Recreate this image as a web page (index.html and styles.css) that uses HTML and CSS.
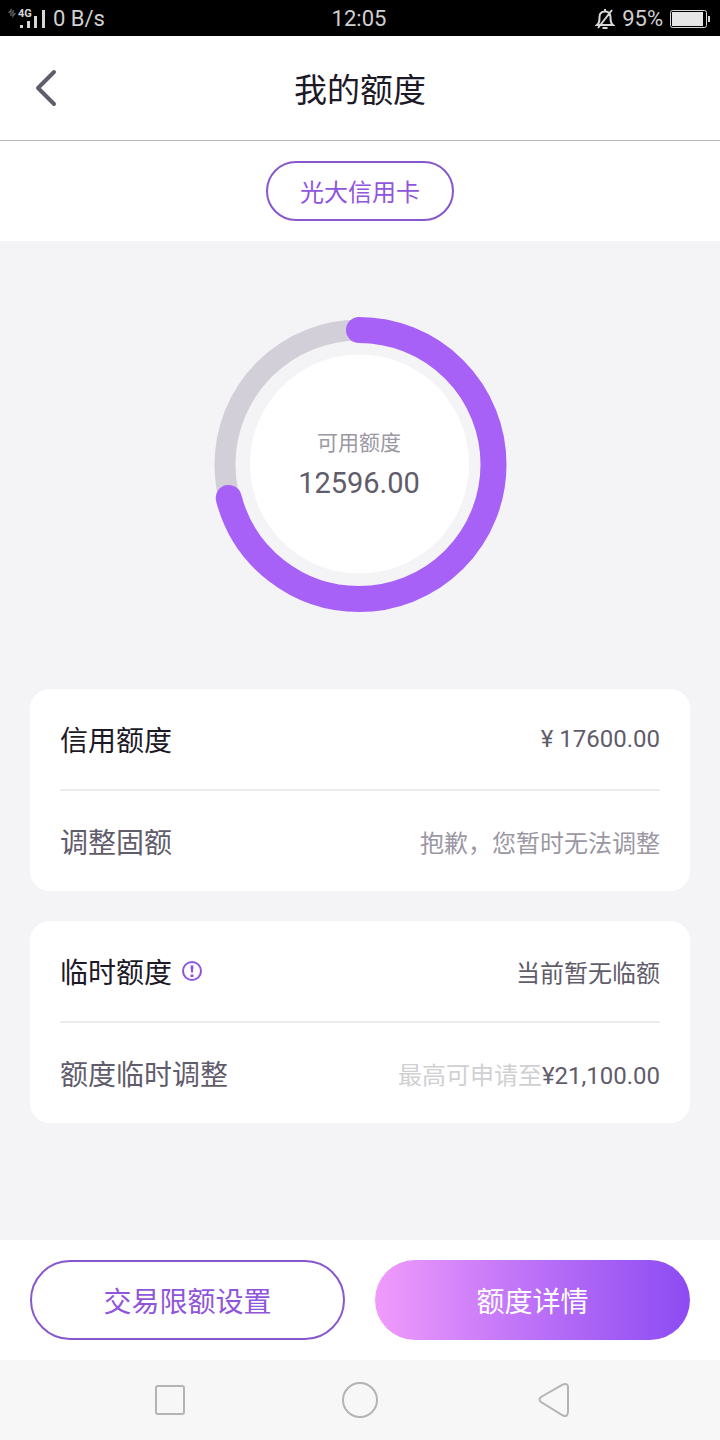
FILE: index.html
```
<!DOCTYPE html>
<html lang="zh-CN">
<head>
    <meta charset="UTF-8">
    <meta name="viewport" content="width=device-width, initial-scale=1.0">
    <title>我的额度</title>
    <link rel="stylesheet" href="styles.css">
</head>
<body>
    <div class="status-bar">
        <div class="status-left">
            <svg width="38" height="24" viewBox="0 0 38 24">
                <path d="M0.500 6L3 3V9M5 3V9L7.500 6" fill="none" stroke="#555" stroke-width="1.500"/>
                <text class="network" x="10" y="10">4G</text>
                <path d="M12 18h3v3h-3zM19 14h3v7h-3zM26 9h3v12h-3zM34 3h3v18h-3z" fill="#d8d8d8"/>
            </svg>
            <span>0 B/s</span>
        </div>
        <span>12:05</span>
        <div class="status-right">
            <svg width="20" height="22" viewBox="0 0 20 22" fill="none" stroke="#d8d8d8" stroke-width="2">
                <path d="M2 17H18C15.500 15 15.500 13 15.500 9C15.500 5 13 3.500 10 3.500S4.500 5 4.500 9C4.500 13 4.500 15 2 17ZM10 1V4M7.500 20H12.500M17 2L3 20"/>
            </svg>
            <span>95%</span>
            <svg width="40" height="20" viewBox="0 0 40 20">
                <rect x="0.500" y="1.500" width="36" height="17" rx="2" fill="none" stroke="#d8d8d8"/>
                <rect x="2" y="3" width="31" height="14" fill="#e6e6e6"/>
                <rect x="38" y="7" width="2" height="6" fill="#d8d8d8"/>
            </svg>
        </div>
    </div>

    <header class="title-bar">
        <button class="back" aria-label="返回">
            <svg width="24" height="40" viewBox="0 0 24 40">
                <path d="M20 4L4 20L20 36" fill="none" stroke="#615c6b" stroke-width="4" stroke-linecap="round" stroke-linejoin="round"/>
            </svg>
        </button>
        <h1>我的额度</h1>
    </header>

    <div class="card-tabs">
        <button class="tab">光大信用卡</button>
    </div>

    <main>
        <div class="gauge">
            <svg width="294" height="295" viewBox="0 0 294 295">
                <circle cx="146.500" cy="147" r="109.500" fill="#fff"/>
                <circle cx="146.500" cy="147.500" r="134.500" fill="none" stroke="#d2cfd8" stroke-width="21"/>
                <circle cx="146" cy="147.500" r="134.500" fill="none" stroke="#a761f7" stroke-width="26" stroke-linecap="round" pathLength="100" stroke-dasharray="71 100" transform="rotate(-90 146 147.500)"/>
            </svg>
            <div class="gauge-text">
                <span class="gauge-label">可用额度</span>
                <span class="gauge-value">12596.00</span>
            </div>
        </div>

        <section class="card">
            <div class="row">
                <span class="name">信用额度</span>
                <span class="value">¥ 17600.00</span>
            </div>
            <div class="row">
                <span class="name sub">调整固额</span>
                <span class="value muted">抱歉，您暂时无法调整</span>
            </div>
        </section>

        <section class="card">
            <div class="row">
                <span class="name">临时额度</span>
                <button class="info" aria-label="说明">
                    <svg width="22" height="22" viewBox="0 0 22 22">
                        <circle cx="11" cy="11" r="9" fill="none" stroke="#8f55dc" stroke-width="2"/>
                        <path d="M9.500 5.500h3l-.5 7h-2zM9.500 14.500h3v2.500h-3z" fill="#8f55dc"/>
                    </svg>
                </button>
                <span class="value">当前暂无临额</span>
            </div>
            <div class="row">
                <span class="name sub">额度临时调整</span>
                <span class="value"><span class="faint">最高可申请至</span>¥21,100.00</span>
            </div>
        </section>
    </main>

    <footer class="actions">
        <button class="btn outline">交易限额设置</button>
        <button class="btn filled">额度详情</button>
    </footer>

    <nav class="system-nav">
        <button aria-label="最近任务">
            <svg width="40" height="40" viewBox="0 0 40 40"><rect x="6" y="6" width="28" height="28" rx="2"/></svg>
        </button>
        <button aria-label="主屏幕">
            <svg width="40" height="40" viewBox="0 0 40 40"><circle cx="20" cy="20" r="17"/></svg>
        </button>
        <button aria-label="返回上一页">
            <svg width="40" height="40" viewBox="0 0 40 40"><path d="M11 17L33 4.500Q37.500 2.500 38 7V32Q37.500 37.500 33 35.500L11 22Q8 19.500 11 17Z"/></svg>
        </button>
    </nav>
</body>
</html>
```
FILE: styles.css
```
* {
    box-sizing: border-box;
}
body {
    display: flex;
    flex-direction: column;
    min-height: 100vh;
    margin: 0;
    font-family: Roboto, "Noto Sans CJK SC", sans-serif;
    background-color: #f4f4f7;
    color: #1d1927;
}
button {
    padding: 0;
    border: none;
    background: none;
    font-family: inherit;
    cursor: pointer;
}
svg {
    display: block;
}
.status-bar {
    display: grid;
    grid-template-columns: 1fr auto 1fr;
    align-items: center;
    height: 36px;
    padding: 0 10px 0 8px;
    background-color: #000;
    color: #d0d0d0;
    font-size: 22px;
    line-height: 38px;
}
.status-left,
.status-right {
    display: flex;
    align-items: center;
    gap: 7px;
}
.status-right {
    justify-content: flex-end;
}
.network {
    fill: #d8d8d8;
    font-size: 11px;
    font-weight: bold;
}
.title-bar {
    display: grid;
    grid-template-columns: 1fr auto 1fr;
    align-items: center;
    height: 105px;
    padding: 0 34px;
    border-bottom: 1px solid #bbb;
    background-color: #fff;
}
.back {
    justify-self: start;
}
h1 {
    margin: 0;
    padding-top: 6px;
    font-size: 33px;
    font-weight: 400;
    line-height: 48px;
}
.card-tabs {
    display: flex;
    justify-content: center;
    padding: 20px 30px;
    background-color: #fff;
}
.tab {
    height: 60px;
    padding: 0 32px 2px;
    border: 2px solid #8857cc;
    border-radius: 30px;
    color: #8f55dc;
    font-size: 24px;
}
main {
    flex: 1;
    padding: 76px 30px 30px;
}
.gauge {
    display: grid;
    justify-content: center;
    align-items: center;
    margin-bottom: 77px;
}
.gauge svg,
.gauge-text {
    grid-area: 1 / 1;
}
.gauge-text {
    display: flex;
    flex-direction: column;
    align-items: center;
    padding: 0 2px 4px 0;
}
.gauge-label {
    color: #9b97a3;
    font-size: 21px;
    line-height: 40px;
}
.gauge-value {
    color: #615c6b;
    font-size: 29px;
    line-height: 40px;
}
.card {
    margin-bottom: 30px;
    padding: 0 30px;
    border-radius: 20px;
    background-color: #fff;
}
.row {
    display: flex;
    align-items: center;
    height: 100px;
}
.row + .row {
    height: 102px;
    border-top: 2px solid #ececee;
}
.name {
    font-size: 28px;
}
.sub {
    color: #615c6b;
}
.info {
    margin-left: 9px;
}
.value {
    margin-left: auto;
    color: #615c6b;
    font-size: 24px;
}
.muted {
    color: #9b97a3;
}
.faint {
    color: #d0d0d2;
}
.actions {
    display: grid;
    grid-template-columns: 1fr 1fr;
    gap: 30px;
    padding: 20px 30px;
    background-color: #fff;
}
.btn {
    height: 80px;
    border-radius: 40px;
    font-size: 28px;
}
.outline {
    border: 2px solid #8857cc;
    color: #8f55dc;
}
.filled {
    background: linear-gradient(to right, #f09bfb, #b76df7 55%, #8d4bf2);
    color: #fff;
}
.system-nav {
    display: flex;
    justify-content: space-between;
    align-items: center;
    height: 80px;
    padding: 0 150px;
    background-color: #f7f7f7;
}
.system-nav svg {
    fill: none;
    stroke: #b4b4b4;
    stroke-width: 2;
}
```
